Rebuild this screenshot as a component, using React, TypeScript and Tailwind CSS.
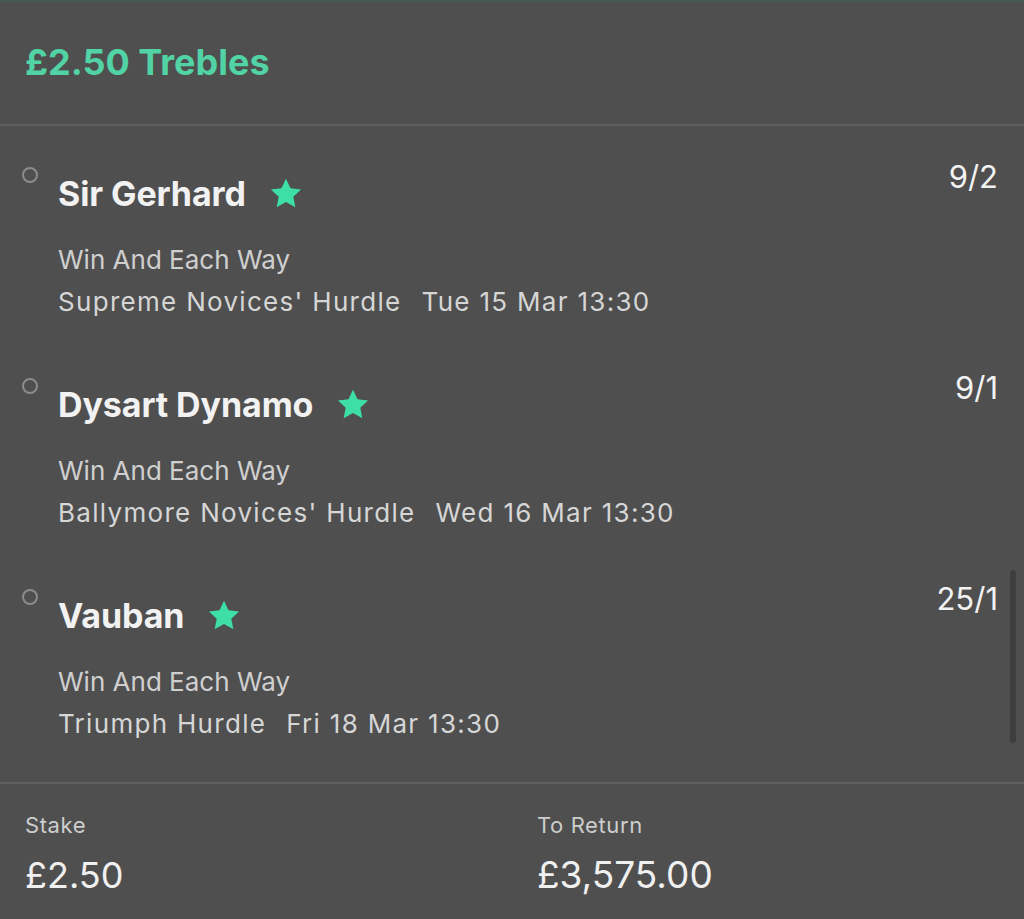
import React from "react";

type Selection = {
  name: string;
  odds: string;
  market: string;
  race: string;
  time: string;
};

const selections: Selection[] = [
  { name: "Sir Gerhard", odds: "9/2", market: "Win And Each Way", race: "Supreme Novices' Hurdle", time: "Tue 15 Mar 13:30" },
  { name: "Dysart Dynamo", odds: "9/1", market: "Win And Each Way", race: "Ballymore Novices' Hurdle", time: "Wed 16 Mar 13:30" },
  { name: "Vauban", odds: "25/1", market: "Win And Each Way", race: "Triumph Hurdle", time: "Fri 18 Mar 13:30" },
];

const Star = () => (
  <svg width="36" height="35" viewBox="0 0 24 24" className="ml-[22px]">
    <path
      d="M12 1.8l3.1 6.6 7.2.9-5.3 5 1.4 7.1L12 17.9l-6.4 3.5L7 14.3l-5.3-5 7.2-.9z"
      fill="#3ddfa5"
    />
  </svg>
);

const SelectionRow = ({ s }: { s: Selection }) => {
  return (
    <div className="flex pt-[41px] pb-[19px]">
      <div className="w-[58px] pl-[22px]">
        <div className="w-[16px] h-[16px] rounded-full border-2 border-[#8c8c8c]" />
      </div>
      <div className="flex-1 pt-[6px]">
        <div className="flex items-center h-[40px]">
          <span className="text-[34px] font-bold text-[#f2f2f2] tracking-[-0.1px]">{s.name}</span>
          <Star />
        </div>
        <p className="mt-[31px] text-[26px] leading-[32px] text-[#cfcfcf]">{s.market}</p>
        <p className="mt-[10px] text-[26px] leading-[32px] text-[#d6d6d6] tracking-[1.3px]">
          {s.race}
          <span className="ml-[20px]">{s.time}</span>
        </p>
      </div>
      <div className="pr-[26px] -mt-[8px]">
        <span className="text-[31px] leading-[36px] text-[#f2f2f2]">{s.odds}</span>
      </div>
    </div>
  );
};

export default function App() {
  return (
    <div
      className="w-[1024px] h-[919px] bg-[#4f4f4f] border-t-2 border-[#435a50] overflow-hidden"
      style={{ fontFamily: "Inter, 'Noto Sans', sans-serif" }}
    >
      <div className="h-[124px] flex items-center pl-[25px] border-b-2 border-[#5f5f5f]">
        <h1 className="text-[36px] font-bold text-[#52d3a5] -mt-[2px]">£2.50 Trebles</h1>
      </div>
      <div className="relative h-[656px]">
        {selections.map((s) => (
          <SelectionRow key={s.name} s={s} />
        ))}
        <div className="absolute right-[8px] top-[444px] w-[6px] h-[173px] rounded-full bg-[#3e3e3e]" />
      </div>
      <div className="border-t-2 border-[#5f5f5f] flex pt-[26px]">
        <div className="w-[512px] pl-[25px]">
          <p className="text-[22px] leading-[30px] text-[#cdcdcd] tracking-[0.6px]">Stake</p>
          <p className="mt-[14px] text-[36px] leading-[42px] text-[#f0f0f0]">£2.50</p>
        </div>
        <div className="pl-[25px]">
          <p className="text-[22px] leading-[30px] text-[#cdcdcd] tracking-[0.6px]">To Return</p>
          <p className="mt-[14px] text-[37px] leading-[42px] text-[#f0f0f0]">£3,575.00</p>
        </div>
      </div>
    </div>
  );
}
